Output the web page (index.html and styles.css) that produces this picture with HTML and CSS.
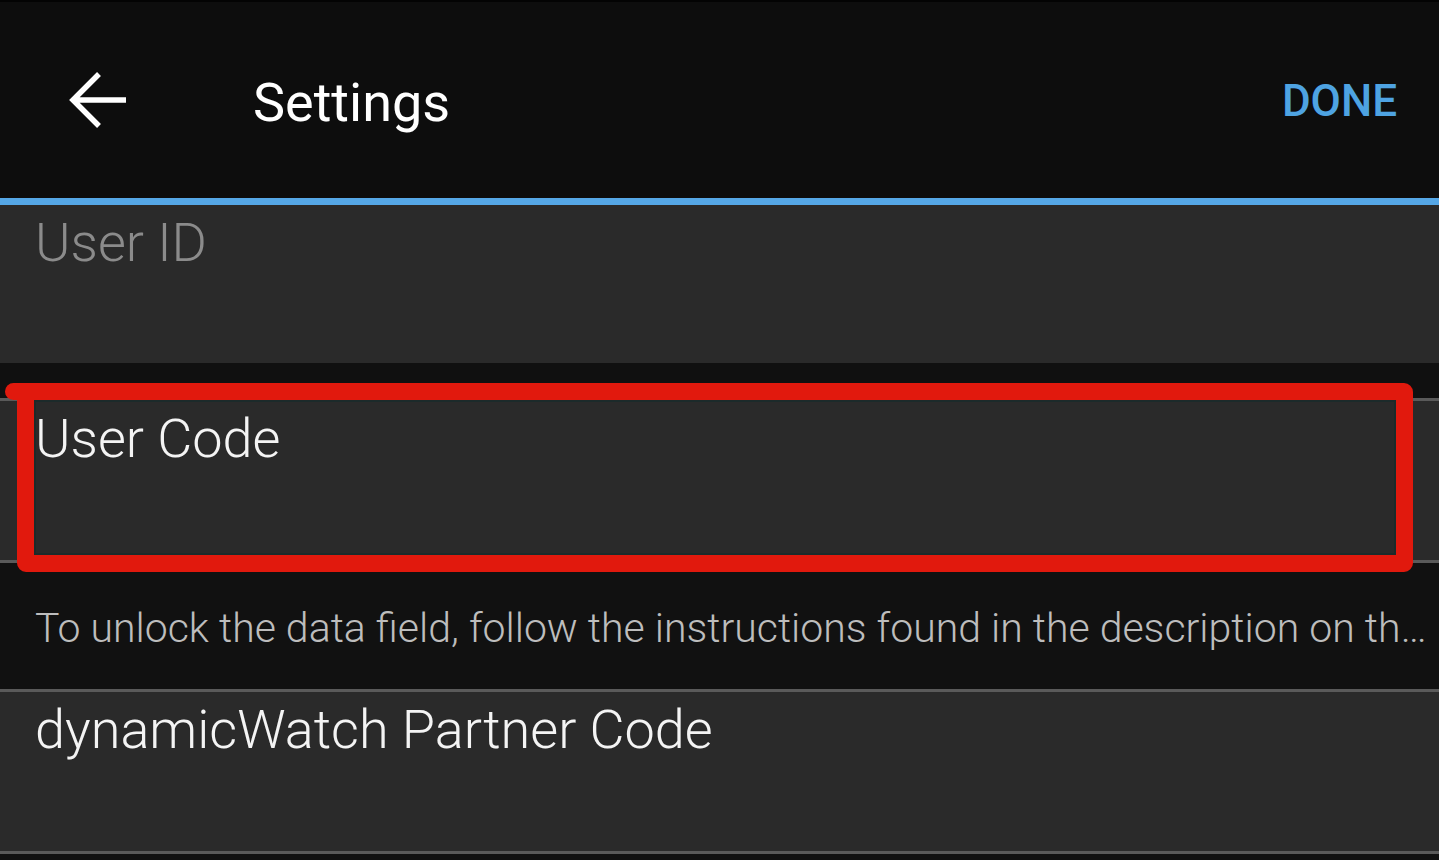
FILE: index.html
```html
<!DOCTYPE html>
<html lang="en">
<head>
<meta charset="utf-8">
<title>Settings</title>
<link rel="stylesheet" href="styles.css">
</head>
<body>
<div class="screen">
  <header class="appbar">
    <button class="back" aria-label="Back">
      <svg width="60" height="60" viewBox="0 0 60 60" aria-hidden="true">
        <path d="M60 30H7M33 4L7 30l26 26" fill="none" stroke="#ffffff" stroke-width="5.5" stroke-linecap="butt" stroke-linejoin="miter"/>
      </svg>
    </button>
    <h1 class="title">Settings</h1>
    <button class="done">DONE</button>
  </header>
  <main class="form">
    <div class="field field-focus">
      <span class="label label-muted">User ID</span>
    </div>
    <div class="spacer"></div>
    <div class="field field-bordered">
      <span class="label">User Code</span>
    </div>
    <p class="hint">To unlock the data field, follow the instructions found in the description on th…</p>
    <div class="field field-bordered">
      <span class="label">dynamicWatch Partner Code</span>
    </div>
    <div class="highlight" aria-hidden="true"></div>
  </main>
</div>
</body>
</html>
```

FILE: styles.css
```css
* { box-sizing: border-box; }
html, body {
  margin: 0;
  padding: 0;
  background: #111111;
  font-family: Roboto, "Noto Sans", "Liberation Sans", sans-serif;
}
.screen {
  width: 1439px;
  height: 860px;
  overflow: hidden;
  background: #111111;
}
.appbar {
  height: 198px;
  background: #0d0d0d;
  border-top: 2px solid #030303;
  display: flex;
  align-items: center;
  padding: 0 42px 0 0;
}
.back {
  width: 60px;
  height: 60px;
  margin: 0 0 0 66px;
  padding: 0;
  border: 0;
  background: transparent;
  display: flex;
}
.title {
  margin: 0 0 0 127px;
  font-size: 54px;
  font-weight: 400;
  color: #ffffff;
  line-height: 1;
  flex: 1;
  padding-top: 6px;
}
.done {
  border: 0;
  padding: 0;
  background: transparent;
  color: #4ea3e2;
  font-family: Roboto, "Noto Sans", sans-serif;
  font-weight: 500;
  font-size: 44px;
  line-height: 1;
  padding-top: 2px;
}
.form {
  position: relative;
}
.field {
  background: #2a2a2a;
  padding: 11px 0 0 35px;
}
.field-focus {
  border-top: 7px solid #55a7e6;
  height: 165px;
}
.field-bordered {
  border-top: 3px solid #5a5a5a;
  border-bottom: 3px solid #5a5a5a;
  height: 165px;
}
.label {
  display: block;
  font-size: 54px;
  font-weight: 300;
  line-height: 1;
  color: #f4f4f4;
}
.label-muted {
  color: #8b8b8b;
}
.spacer {
  height: 35px;
  background: #101010;
}
.hint {
  margin: 0;
  height: 126px;
  padding: 45px 0 0 35px;
  font-size: 41px;
  font-weight: 300;
  line-height: 1;
  color: #bdbdbd;
  white-space: nowrap;
}
.highlight {
  position: absolute;
  left: 17px;
  top: 185px;
  width: 1396px;
  height: 189px;
  border: 17px solid #e1190d;
  border-radius: 9px;
  box-shadow: inset 0 0 0 2px #1c2a2a;
}
.highlight::before {
  content: "";
  position: absolute;
  left: -29px;
  top: -17px;
  width: 24px;
  height: 17px;
  background: #e1190d;
  border-radius: 9px 0 0 9px;
}
```
